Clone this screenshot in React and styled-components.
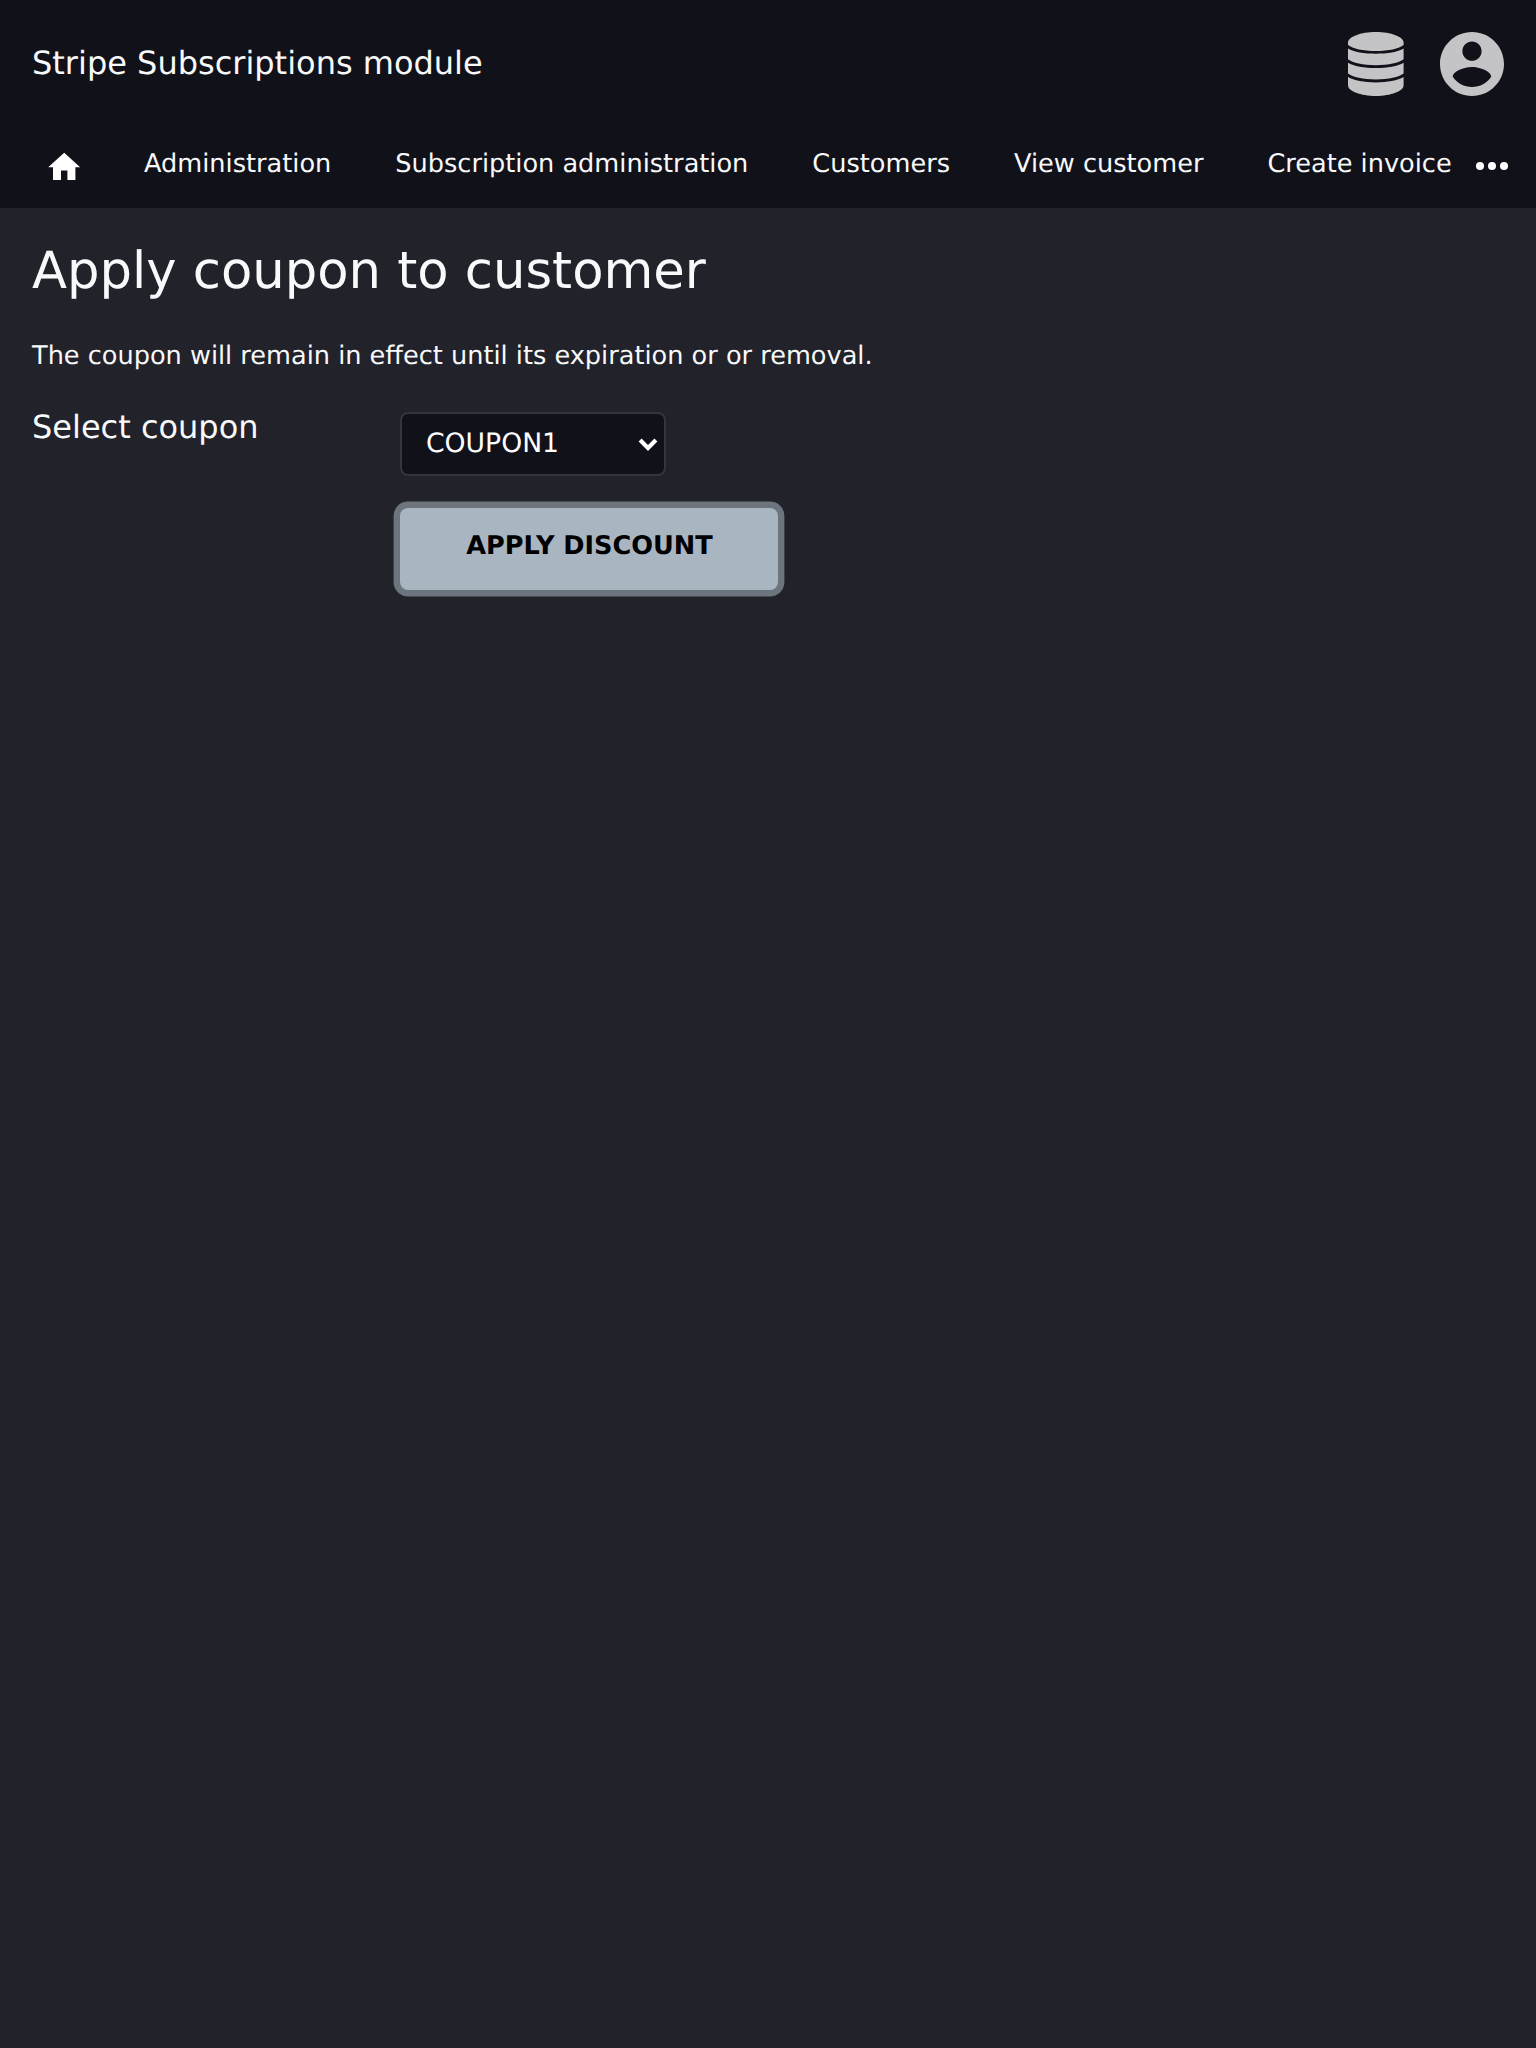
import React from "react";
import styled, { createGlobalStyle } from "styled-components";

const GlobalStyle = createGlobalStyle`
  *, *::before, *::after { box-sizing: border-box; }
  body {
    margin: 0;
    background: #22222b;
    color: #f8f9fa;
    font-family: "DejaVu Sans", sans-serif;
    font-size: 25.6px;
    line-height: 30px;
    text-rendering: geometricPrecision;
  }
`;

const Header = styled.header`
  height: 208px;
  background: #11111a;
`;

const TitleBar = styled.div`
  display: flex;
  justify-content: space-between;
  height: 128px;
  padding: 32px;
`;

const SiteTitle = styled.div`
  padding-top: 11px;
  font-size: 32px;
  line-height: 40px;
`;

const Actions = styled.div`
  display: flex;
  gap: 32px;
  color: #c4c4c6;
`;

const ActionIcon = styled.svg`
  display: block;
  width: 64px;
  height: 64px;
  fill: currentColor;
`;

const NavBar = styled.nav`
  display: flex;
  justify-content: space-between;
  height: 80px;
  padding: 0 20px 0 12px;
`;

const NavList = styled.div`
  display: flex;
  flex: 1;
  min-width: 0;
`;

const NavItem = styled.a`
  padding: 21px 32px 19px;
  color: inherit;
  white-space: nowrap;
  text-decoration: none;
`;

const HomeLink = styled(NavItem)`
  flex-shrink: 0;
  width: 100px;
  padding: 19.6px 0 0 32.8px;
`;

const HomeIcon = styled.svg`
  display: block;
  width: 38.4px;
  height: 38.4px;
  fill: #fff;
`;

const MoreIcon = styled.svg`
  display: block;
  flex-shrink: 0;
  width: 48px;
  height: 48px;
  margin-top: 14px;
  fill: #fff;
`;

const Main = styled.main`
  padding: 33px 32px 32px;
`;

const Heading = styled.h1`
  margin: 0 0 34px;
  font-size: 51.2px;
  font-weight: 400;
  line-height: 60px;
`;

const Intro = styled.p`
  margin: 0;
  padding-top: 6px;
`;

const Form = styled.div`
  display: grid;
  grid-template-columns: 368px max-content;
  row-gap: 32px;
  margin-top: 41px;
`;

const Label = styled.label`
  margin-top: -4px;
  font-size: 32px;
  line-height: 38px;
`;

const SelectBox = styled.div`
  position: relative;
  width: 266px;
  height: 64px;
`;

const Select = styled.select`
  appearance: none;
  display: block;
  width: 100%;
  height: 100%;
  padding: 0 24px 2px;
  border: 2px solid #30373e;
  border-radius: 8px;
  background: #11111a;
  color: #fff;
  font: 26.67px "DejaVu Sans", sans-serif;
  text-rendering: geometricPrecision;
`;

const Chevron = styled.svg`
  position: absolute;
  top: 26px;
  right: 8px;
  width: 20px;
  height: 14px;
  fill: none;
  stroke: #fff;
  stroke-width: 4.1;
  pointer-events: none;
`;

const Button = styled.button`
  grid-column: 2;
  width: 378px;
  height: 82px;
  padding: 0 0 7px 1px;
  border: 0;
  border-radius: 8px;
  background: #a9b5c1;
  box-shadow: 0 0 0 6.4px #6c757d;
  color: #000;
  font: 700 25.6px "DejaVu Sans", sans-serif;
  text-rendering: geometricPrecision;
  text-transform: uppercase;
`;

const links = [
  "Administration",
  "Subscription administration",
  "Customers",
  "View customer",
  "Create invoice",
];

export default function App() {
  return (
    <>
      <GlobalStyle />
      <Header>
        <TitleBar>
          <SiteTitle>Stripe Subscriptions module</SiteTitle>
          <Actions>
            <ActionIcon viewBox="0.2 0 64 64">
              <path d="M4.200 10.700C4.200 4.800 16.700 0 32 0S59.800 4.800 59.800 10.700V13C55 16.700 45 19 32 19S9 16.700 4.200 13Z" />
              <path d="M4.200 16.500C10 20 20.500 21.700 32 21.700S54 20 59.800 16.500V27.300C55 31 45 33.200 32 33.200S9 31 4.200 27.300Z" />
              <path d="M4.200 30.800C10 34.300 20.500 36.100 32 36.100S54 34.300 59.800 30.800V41.600C55 45.300 45 47.500 32 47.500S9 45.300 4.200 41.600Z" />
              <path d="M4.200 45.100C10 48.600 20.500 50.500 32 50.500S54 48.600 59.800 45.100V53.300C59.800 59.200 47.300 64 32 64S4.200 59.200 4.200 53.300Z" />
            </ActionIcon>
            <ActionIcon viewBox="2 2 20 20">
              <path d="M12 2C6.480 2 2 6.480 2 12s4.480 10 10 10 10-4.480 10-10S17.520 2 12 2zm0 3c1.660 0 3 1.340 3 3s-1.340 3-3 3-3-1.340-3-3 1.340-3 3-3zm0 14.200c-2.500 0-4.710-1.280-6-3.220.03-1.990 4-3.080 6-3.080 1.990 0 5.970 1.090 6 3.080-1.290 1.940-3.500 3.220-6 3.220z" />
            </ActionIcon>
          </Actions>
        </TitleBar>
        <NavBar>
          <NavList>
            <HomeLink href="#">
              <HomeIcon viewBox="0 0 24 24">
                <path d="M10 20v-6h4v6h5v-8h3L12 3 2 12h3v8z" />
              </HomeIcon>
            </HomeLink>
            {links.map((link) => (
              <NavItem key={link} href="#">{link}</NavItem>
            ))}
          </NavList>
          <MoreIcon viewBox="0 0 24 24">
            <circle cx="6" cy="12" r="2" />
            <circle cx="12" cy="12" r="2" />
            <circle cx="18" cy="12" r="2" />
          </MoreIcon>
        </NavBar>
      </Header>
      <Main>
        <Heading>Apply coupon to customer</Heading>
        <Intro>The coupon will remain in effect until its expiration or or removal.</Intro>
        <Form>
          <Label htmlFor="coupon">Select coupon</Label>
          <SelectBox>
            <Select id="coupon" defaultValue="COUPON1">
              <option>COUPON1</option>
            </Select>
            <Chevron viewBox="0 0 20 14">
              <path d="M2.100 2L10 10L17.900 2" />
            </Chevron>
          </SelectBox>
          <Button type="button">Apply discount</Button>
        </Form>
      </Main>
    </>
  );
}
